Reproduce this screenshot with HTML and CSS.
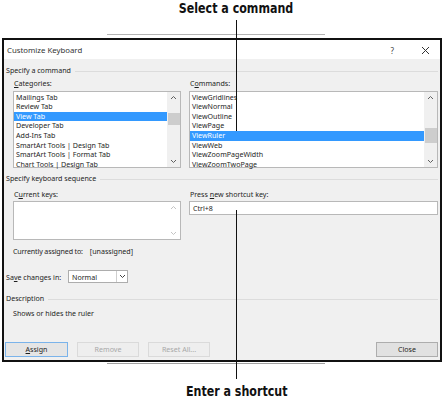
FILE: index.html
```html
<!DOCTYPE html>
<html>
<head>
<meta charset="utf-8">
<link rel="stylesheet" href="styles.css">
</head>
<body>
<div class="page">
  <div class="callout callout-top"><span class="callout-text">Select a command</span></div>
  <div class="shadow shadow-top"></div>
  <div class="dialog">
    <div class="titlebar">
      <span class="title">Customize Keyboard</span>
      <span class="help">?</span>
      <svg class="close" width="9" height="9" viewBox="0 0 9 9"><path d="M1 1L8 8M8 1L1 8" stroke="#333" stroke-width="1" fill="none"/></svg>
    </div>
    <div class="body">
      <div class="group-head"><span>Specify a command</span></div>
      <div class="cols">
        <div class="col col-left">
          <div class="label"><u>C</u>ategories:</div>
          <div class="listbox lb-main">
            <div class="items">
              <div class="item">Mailings Tab</div>
              <div class="item">Review Tab</div>
              <div class="item sel">View Tab</div>
              <div class="item">Developer Tab</div>
              <div class="item">Add-Ins Tab</div>
              <div class="item">SmartArt Tools | Design Tab</div>
              <div class="item">SmartArt Tools | Format Tab</div>
              <div class="item">Chart Tools | Design Tab</div>
            </div>
            <div class="scrollbar">
              <svg class="chev" width="7" height="5" viewBox="0 0 7 5"><path d="M1 4L3.5 1.5L6 4" stroke="#606060" fill="none"/></svg>
              <div class="track"><div class="thumb thumb-cat"></div></div>
              <svg class="chev" width="7" height="5" viewBox="0 0 7 5"><path d="M1 1L3.5 3.5L6 1" stroke="#606060" fill="none"/></svg>
            </div>
          </div>
        </div>
        <div class="col col-right">
          <div class="label">C<u>o</u>mmands:</div>
          <div class="listbox lb-main">
            <div class="items">
              <div class="item">ViewGridlines</div>
              <div class="item">ViewNormal</div>
              <div class="item">ViewOutline</div>
              <div class="item">ViewPage</div>
              <div class="item sel">ViewRuler</div>
              <div class="item">ViewWeb</div>
              <div class="item">ViewZoomPageWidth</div>
              <div class="item">ViewZoomTwoPage</div>
            </div>
            <div class="scrollbar">
              <svg class="chev" width="7" height="5" viewBox="0 0 7 5"><path d="M1 4L3.5 1.5L6 4" stroke="#606060" fill="none"/></svg>
              <div class="track"><div class="thumb thumb-cmd"></div></div>
              <svg class="chev" width="7" height="5" viewBox="0 0 7 5"><path d="M1 1L3.5 3.5L6 1" stroke="#606060" fill="none"/></svg>
            </div>
          </div>
        </div>
      </div>

      <div class="group-head gh-seq"><span>Specify keyboard sequence</span></div>
      <div class="cols">
        <div class="col col-left">
          <div class="label label-2">C<u>u</u>rrent keys:</div>
          <div class="listbox lb-keys">
            <div class="items"></div>
            <div class="scrollbar sb-disabled">
              <svg class="chev" width="7" height="5" viewBox="0 0 7 5"><path d="M1 4L3.5 1.5L6 4" stroke="#c4c4c4" fill="none"/></svg>
              <svg class="chev" width="7" height="5" viewBox="0 0 7 5"><path d="M1 1L3.5 3.5L6 1" stroke="#c4c4c4" fill="none"/></svg>
            </div>
          </div>
        </div>
        <div class="col col-right">
          <div class="label label-2">Press <u>n</u>ew shortcut key:</div>
          <div class="input">Ctrl+8</div>
        </div>
      </div>

      <div class="assigned"><span class="assigned-label">Currently assigned to:</span><span>[unassigned]</span></div>

      <div class="save-row">
        <span class="save-label">Sa<u>v</u>e changes in:</span>
        <div class="combo">
          <span class="combo-text">Normal</span>
          <span class="combo-btn"><svg width="7" height="5" viewBox="0 0 7 5"><path d="M1 1L3.5 3.5L6 1" stroke="#404040" fill="none"/></svg></span>
        </div>
      </div>

      <div class="group-head gh-desc"><span>Description</span></div>
      <div class="desc">Shows or hides the ruler</div>

      <div class="buttons">
        <div class="btn btn-default"><u>A</u>ssign</div>
        <div class="btn btn-disabled">Remove</div>
        <div class="btn btn-disabled">Reset All...</div>
        <div class="btn btn-close">Close</div>
      </div>
    </div>
  </div>
  <div class="shadow shadow-bottom"></div>
  <div class="callout callout-bottom"><span class="callout-text">Enter a shortcut</span></div>

  <div class="pointer pointer-top"></div>
  <div class="pointer pointer-bottom"></div>
</div>
</body>
</html>
```

FILE: styles.css
```css
* { box-sizing: border-box; }
html, body { margin: 0; padding: 0; background: #ffffff; }
.page {
  position: relative;
  width: 444px;
  height: 400px;
  overflow: hidden;
  font-family: "Noto Sans", "DejaVu Sans", sans-serif;
  font-size: 7.1px;
  color: #1e1e1e;
}
u { text-decoration: underline; text-underline-offset: 1px; }

.callout {
  font-family: "DejaVu Sans Condensed", "DejaVu Sans", sans-serif;
  font-weight: bold;
  font-size: 14px;
  line-height: 16px;
  height: 16px;
  color: #111;
  display: flex;
  justify-content: center;
  padding-left: 29px;
}
.callout-text { display: inline-block; transform: scaleX(0.88); white-space: nowrap; }
.shadow { height: 1px; background: #b4b4b4; width: 218px; margin-left: 107px; }
.shadow-top { margin-top: 18px; margin-bottom: 3px; }
.shadow-bottom { margin-top: 1px; background: #a0a0a0; }
.callout-bottom { margin-top: 19px; }

.dialog {
  margin-left: 2px;
  width: 440px;
  height: 324px;
  border: 2px solid #111;
  background: #f0f0f0;
  display: flex;
  flex-direction: column;
}
.titlebar {
  height: 19px;
  background: #ffffff;
  display: flex;
  align-items: center;
  padding-left: 3px;
  padding-top: 1px;
}
.title { font-size: 7.8px; color: #333; flex: 1; }
.help { font-size: 8px; color: #444; margin-right: 27px; }
.close { margin-right: 10px; }

.body { flex: 1; padding: 5px 2px 0 1px; }
.group-head {
  display: flex;
  align-items: center;
  height: 12px;
  line-height: 12px;
  margin-left: 1px;
  white-space: nowrap;
}
.group-head::after {
  content: "";
  flex: 1;
  height: 1px;
  background: #dcdcdc;
  margin-left: 4px;
  margin-top: 2px;
}
.gh-seq { margin-top: 4px; }
.gh-desc { margin-top: 9px; }

.cols { display: flex; margin-left: 8px; gap: 8px; }
.col-left { width: 168px; }
.col-right { width: 249px; }
.label { height: 12px; line-height: 12px; margin-top: 1px; margin-bottom: 2px; padding-left: 1px; white-space: nowrap; }
.label-2 { margin-top: 4px; margin-bottom: 1px; }

.listbox {
  display: flex;
  border: 1px solid #b8b8b8;
  background: #ffffff;
}
.lb-main { height: 77px; }
.lb-keys { height: 39px; }
.items { flex: 1; padding-top: 0.5px; }
.item { height: 9.65px; line-height: 9.65px; padding-left: 2px; white-space: nowrap; }
.item.sel { background: #3399ff; color: #ffffff; }
.scrollbar {
  width: 13px;
  background: #f0f0f0;
  display: flex;
  flex-direction: column;
  align-items: center;
  justify-content: space-between;
  padding: 3px 0;
}
.sb-disabled { background: #ffffff; }
.track { flex: 1; width: 100%; position: relative; }
.thumb { position: absolute; left: 1px; right: 0; background: #cdcdcd; }
.thumb-cat { top: 13px; height: 12px; }
.thumb-cmd { top: 28px; height: 15px; }

.input {
  height: 14px;
  border: 1px solid #b8b8b8;
  background: #ffffff;
  line-height: 12px;
  padding-left: 3px;
}

.assigned { margin-left: 8px; margin-top: 5px; height: 12px; line-height: 12px; display: flex; white-space: nowrap; }
.assigned-label { letter-spacing: -0.15px; margin-right: 7px; }

.save-row { display: flex; align-items: center; margin-top: 13px; margin-left: 1px; height: 13px; white-space: nowrap; }
.save-label { width: 62px; }
.combo {
  width: 60px;
  height: 13px;
  border: 1px solid #adadad;
  background: #ffffff;
  display: flex;
  align-items: center;
}
.combo-text { flex: 1; padding-left: 3px; }
.combo-btn {
  width: 11px;
  height: 11px;
  border-left: 1px solid #cfcfcf;
  display: flex;
  align-items: center;
  justify-content: center;
}

.desc { margin-left: 8px; margin-top: 3px; height: 12px; line-height: 12px; }

.buttons { display: flex; gap: 9px; margin-top: 23px; }
.btn {
  width: 63px;
  height: 15px;
  line-height: 13px;
  text-align: center;
  border: 1px solid #adadad;
  background: #e1e1e1;
}
.btn-default { border-color: #7ab3ea; background: #e5e5e5; }
.btn-disabled { border-color: #dadada; background: #eeeeee; color: #a8a8a8; width: 62px; }
.btn-close { margin-left: auto; width: 62px; }

.pointer { position: absolute; left: 235.5px; width: 1.5px; background: #111; }
.pointer-top { top: 20px; height: 111px; }
.pointer-bottom { top: 210px; height: 169px; }
```
